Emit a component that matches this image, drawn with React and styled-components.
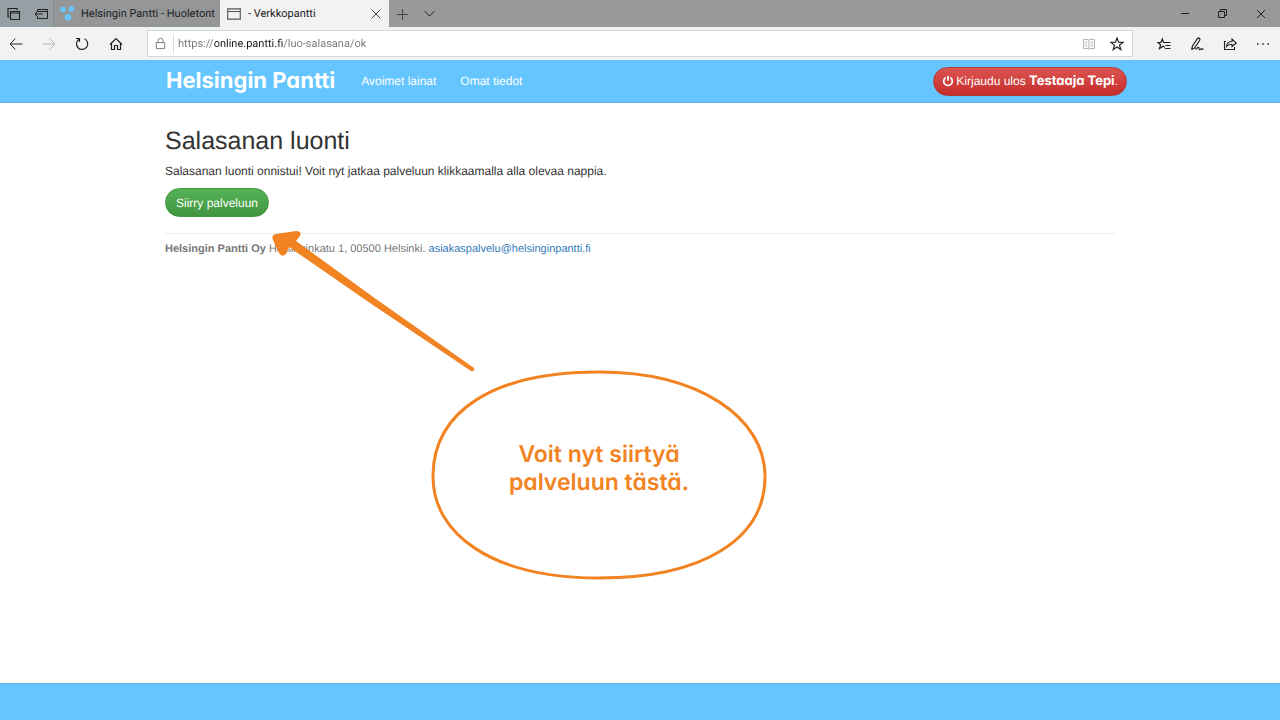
import React from 'react'
import styled, { createGlobalStyle } from 'styled-components'

const GlobalStyle = createGlobalStyle`
  * {
    box-sizing: border-box;
  }
  body {
    margin: 0;
    background: white;
    font-family: 'Liberation Sans', Arial, sans-serif;
    font-size: 12px;
    text-rendering: geometricPrecision;
    color: #333;
  }
  button,
  input {
    font: inherit;
    text-rendering: inherit;
  }
`

const Page = styled.div`
  display: flex;
  flex-direction: column;
  min-height: 100vh;
`

/* Browser window */

const TitleBar = styled.div`
  display: flex;
  align-items: stretch;
  height: 27px;
  background: #999;
  font-family: Roboto, 'Open Sans', sans-serif;
  font-size: 11px;
`

const TabTools = styled.div`
  display: flex;
  width: 54px;
  background: #96a0a4;
  border-right: 1px solid #858c90;
`

const IconButton = styled.button`
  display: flex;
  align-items: center;
  justify-content: center;
  flex: none;
  width: ${props => props.$width || 27}px;
  padding: 0;
  border: 0;
  background: none;
  color: ${props => (props.disabled ? '#b5b5b5' : '#222')};
`

const Tab = styled.div`
  display: flex;
  align-items: center;
  gap: 6px;
  width: ${props => (props.$active ? 169 : 166)}px;
  padding-left: 6px;
  background: ${props => (props.$active ? '#f2f2f2' : '#949698')};
  color: #222;
`

const TabTitle = styled.span`
  flex: 1;
  white-space: nowrap;
`

const WindowControls = styled.div`
  display: flex;
  margin-left: auto;
`

const Toolbar = styled.div`
  display: flex;
  align-items: stretch;
  height: 33px;
  background: #f2f2f2;
`

const AddressBar = styled.div`
  display: flex;
  align-items: center;
  flex: 1;
  margin: 3px 14px 3px 14px;
  border: 1px solid #ccdbe2;
  background: white;
`

const LockBox = styled.span`
  display: flex;
  justify-content: center;
  width: 26px;
  height: 20px;
  align-items: center;
  border-right: 1px solid #ddd;
  color: #777;
`

/* the host name is darker than the rest of the address */
const Address = styled.input`
  flex: 1;
  min-width: 0;
  padding: 0 0 0 4px;
  border: 0;
  outline: 0;
  font-family: Roboto, 'Open Sans', sans-serif;
  font-size: 11px;
  line-height: 20px;
  background: linear-gradient(
    to right,
    #777 39px,
    #1a1a1a 39px,
    #1a1a1a 109px,
    #777 109px
  );
  background-clip: text;
  -webkit-text-fill-color: transparent;
`

/* Site */

const NavBar = styled.header`
  display: flex;
  justify-content: center;
  height: 43px;
  padding: 0 16px;
  background: #65c6ff;
  border-bottom: 1px solid #58abdc;
`

const NavInner = styled.div`
  display: flex;
  align-items: center;
  width: 100%;
  max-width: 974px;
  padding-left: 13px;
`

const Brand = styled.a`
  margin-right: 26px;
  color: white;
  font-family: Inter, sans-serif;
  font-feature-settings: 'cv11';
  font-size: 22px;
  font-weight: 700;
  text-decoration: none;
  white-space: nowrap;
`

const NavLinks = styled.nav`
  display: flex;
  gap: 24px;
`

const NavLink = styled.a`
  color: white;
  text-decoration: none;
  white-space: nowrap;
`

const PillButton = styled.button`
  display: flex;
  align-items: center;
  gap: 2px;
  height: 29px;
  padding: 0 10px;
  border: 1px solid ${props => (props.$danger ? '#b13c3c' : '#419641')};
  border-radius: 15px;
  background: ${props =>
    props.$danger
      ? 'linear-gradient(#dc5350, #c52d2b)'
      : 'linear-gradient(#56b356, #409540)'};
  color: white;
  line-height: 16px;
  white-space: nowrap;
`

const LogoutButton = styled(PillButton)`
  margin-left: auto;
  padding: 0 8px;
`

const UserName = styled.strong`
  font-family: Inter, sans-serif;
  font-feature-settings: 'cv11';
  font-size: 13px;
  font-weight: 700;
`

const Content = styled.main`
  position: relative;
  flex: 1;
  width: calc(100% - 32px);
  max-width: 950px;
  margin: 0 auto;
  padding-top: 24px;
`

const Title = styled.h1`
  margin: 0 0 8px;
  font-size: 25px;
  font-weight: 400;
  line-height: 28px;
`

const Lead = styled.p`
  margin: 0 0 8px;
  line-height: 17px;
`

const Contact = styled.address`
  margin-top: 16px;
  padding-top: 8px;
  border-top: 1px solid #eee;
  color: #777;
  font-size: 11px;
  font-style: normal;
  line-height: 15px;

  a {
    color: #337ab7;
    text-decoration: none;
  }
`

/* Hint drawn over the page, it points at the green button */
const Hint = styled.aside`
  position: absolute;
  top: 125px;
  left: 105px;
  width: 500px;
  color: #f28322;
  pointer-events: none;
`

const HintDrawing = styled.svg`
  display: block;
`

const HintText = styled.p`
  position: absolute;
  top: 212px;
  left: 163px;
  width: 332px;
  margin: 0;
  font-family: Inter, sans-serif;
  font-feature-settings: 'cv11';
  font-size: 23px;
  font-weight: 600;
  line-height: 28px;
  text-align: center;
`

const Footer = styled.footer`
  height: 37px;
  background: #65c6ff;
  border-top: 1px solid #5ebae8;
`

const Icon = ({ size = 14, stroke = 1, children }) => (
  <svg
    width={size}
    height={size}
    viewBox="0 0 14 14"
    fill="none"
    stroke="currentColor"
    strokeWidth={stroke}
    aria-hidden="true"
  >
    {children}
  </svg>
)

const BrowserTabs = () => (
  <TitleBar>
    <TabTools>
      <IconButton aria-label="Välilehdet">
        <Icon>
          <path d="M3.5 4.5h9v8h-9zM3.5 6h9M2 10H1V1.5h9V3" strokeWidth="1.2" />
        </Icon>
      </IconButton>
      <IconButton aria-label="Siirrä välilehdet sivuun">
        <Icon>
          <path d="M3.5 5V2.5h10v9h-10V9M3.5 4.5h10M.8 7h8M3.5 4.5L1 7l2.5 2.5" />
        </Icon>
      </IconButton>
    </TabTools>
    <Tab>
      <Icon size={15}>
        <g fill="#65c6ff" stroke="none">
          <circle cx="2.8" cy="3.2" r="2.5" />
          <circle cx="10.5" cy="2.8" r="2.6" />
          <circle cx="7.5" cy="10.5" r="3.1" />
        </g>
      </Icon>
      <TabTitle>Helsingin Pantti - Huoletont</TabTitle>
    </Tab>
    <Tab $active>
      <Icon size={16}>
        <path d="M1.5 2.5h11v9h-11zM1.5 4.8h11" stroke="#555" />
      </Icon>
      <TabTitle>- Verkkopantti</TabTitle>
      <IconButton aria-label="Sulje välilehti">
        <Icon size={12}>
          <path d="M2 2l10 10M12 2L2 12" />
        </Icon>
      </IconButton>
    </Tab>
    <IconButton aria-label="Uusi välilehti">
      <Icon>
        <path d="M6.5 2v11M1 7.5h11" stroke="#444" />
      </Icon>
    </IconButton>
    <IconButton aria-label="Esikatselu">
      <Icon>
        <path d="M1.5 4l5 5 5-5" />
      </Icon>
    </IconButton>
    <WindowControls>
      <IconButton $width={38} aria-label="Pienennä">
        <Icon>
          <path d="M3 6.5h8" />
        </Icon>
      </IconButton>
      <IconButton $width={38} aria-label="Palauta">
        <Icon>
          <path d="M2.5 4.5h6v6h-6zM4.5 4V2.5h6v6H9" />
        </Icon>
      </IconButton>
      <IconButton $width={38} aria-label="Sulje">
        <Icon>
          <path d="M3 3l8 8M11 3l-8 8" />
        </Icon>
      </IconButton>
    </WindowControls>
  </TitleBar>
)

const BrowserToolbar = () => (
  <Toolbar>
    <IconButton $width={32} aria-label="Takaisin">
      <Icon>
        <path d="M1 7h12.5M6.5 1.5L1 7l5.5 5.5" />
      </Icon>
    </IconButton>
    <IconButton $width={33} aria-label="Eteenpäin" disabled>
      <Icon>
        <path d="M.5 7H13M7.5 1.5L13 7l-5.5 5.5" />
      </Icon>
    </IconButton>
    <IconButton $width={34} aria-label="Päivitä">
      <Icon>
        <path d="M9.5 1.8A5.6 5.6 0 1 1 4 2.2M4.5 5V1.5H1" strokeWidth="1.2" />
      </Icon>
    </IconButton>
    <IconButton $width={34} aria-label="Aloitussivu">
      <Icon>
        <path d="M1 7.5l6-6 6 6M2.5 6.5v6h3v-4h3v4h3v-6" strokeWidth="1.2" />
      </Icon>
    </IconButton>
    <AddressBar>
      <LockBox>
        <Icon size={13}>
          <path d="M2.5 6h9v6.5h-9zM4.2 6V4.2a2.8 2.8 0 0 1 5.6 0V6" />
        </Icon>
      </LockBox>
      <Address
        aria-label="Osoite"
        defaultValue="https://online.pantti.fi/luo-salasana/ok"
        spellCheck="false"
      />
      <IconButton aria-label="Lukunäkymä" disabled>
        <Icon>
          <path d="M7 3v9M1.5 2.5H6l1 .8 1-.8h4.5v9H8l-1 .8-1-.8H1.5zM3 5h2M3 7h2M3 9h2M9 5h2M9 7h2M9 9h2" />
        </Icon>
      </IconButton>
      <IconButton $width={30} aria-label="Lisää suosikkeihin">
        <Icon>
          <path d="M7 1l1.6 4.2 4.4.2-3.5 2.7 1.3 4.4L7 10l-3.8 2.5 1.3-4.4L1 5.4l4.4-.2z" strokeWidth="1.2" />
        </Icon>
      </IconButton>
    </AddressBar>
    <IconButton $width={33} aria-label="Suosikit">
      <Icon>
        <path d="M7.5 5.5h6M8.5 8.5h5M8 11.5h5.5M8 5.5H6.5L5.3 2 4 5.5H.8l2.7 2.3-1 3.8L6 9.3l2 1" strokeWidth="1.2" />
      </Icon>
    </IconButton>
    <IconButton $width={33} aria-label="Muistiinpano">
      <Icon>
        <path d="M1.5 12.5l1-3.5L7.5 1.5q1-1 2 0 .8.8 0 2L4.5 11l-3 1.5M5.5 12.5c2.5-3 3.5-2.5 3.5-1s1.2 1.3 2 .3l2.5.4" strokeWidth="1.2" />
      </Icon>
    </IconButton>
    <IconButton $width={33} aria-label="Jaa">
      <Icon>
        <path d="M3 4.5H1.5v8h10V10M3.5 9.5c.3-3.500 2-5 5.500-5V2l4.300 4L9 9.500V7.200c-2.500 0-4 .5-5.500 2.300z" strokeWidth="1.1" />
      </Icon>
    </IconButton>
    <IconButton $width={34} aria-label="Lisää">
      <Icon>
        <path d="M1 7h1.5M6.3 7h1.5M11.5 7H13" strokeWidth="1.5" />
      </Icon>
    </IconButton>
  </Toolbar>
)

const App = () => (
  <Page>
    <GlobalStyle />
    <BrowserTabs />
    <BrowserToolbar />
    <NavBar>
      <NavInner>
        <Brand href="#">Helsingin Pantti</Brand>
        <NavLinks>
          <NavLink href="#lainat">Avoimet lainat</NavLink>
          <NavLink href="#tiedot">Omat tiedot</NavLink>
        </NavLinks>
        <LogoutButton $danger>
          <Icon size={12} stroke={2}>
            <path d="M4.3 3a5 5 0 1 0 5.4 0M7 .8v6" />
          </Icon>
          <span>
            Kirjaudu ulos <UserName>Testaaja Tepi</UserName>.
          </span>
        </LogoutButton>
      </NavInner>
    </NavBar>
    <Content>
      <Title>Salasanan luonti</Title>
      <Lead>
        Salasanan luonti onnistui! Voit nyt jatkaa palveluun klikkaamalla alla
        olevaa nappia.
      </Lead>
      <PillButton>Siirry palveluun</PillButton>
      <Contact>
        <strong>Helsingin Pantti Oy</strong> Helsinginkatu 1, 00500 Helsinki.{' '}
        <a href="mailto:asiakaspalvelu@helsinginpantti.fi">
          asiakaspalvelu@helsinginpantti.fi
        </a>
      </Contact>
      <Hint>
        <HintDrawing width="500" height="354" viewBox="0 0 500 354" aria-hidden="true">
          <path
            d="M6 6Q1 7 3 12L9 25Q12 30 16 26L19 19L100 75L201 143Q205 144 204 140L106 71L26 13L30 8Q32 3 26 3Z"
            fill="currentColor"
          />
          <path
            d="M163 247C164 184 222 144 329 144C430 144 494 190 495 247C496 311 433 350 329 350C222 350 162 306 163 247Z"
            fill="none"
            stroke="currentColor"
            strokeWidth="3"
          />
        </HintDrawing>
        <HintText>
          Voit nyt siirtyä
          <br />
          palveluun tästä.
        </HintText>
      </Hint>
    </Content>
    <Footer />
  </Page>
)

export default App
